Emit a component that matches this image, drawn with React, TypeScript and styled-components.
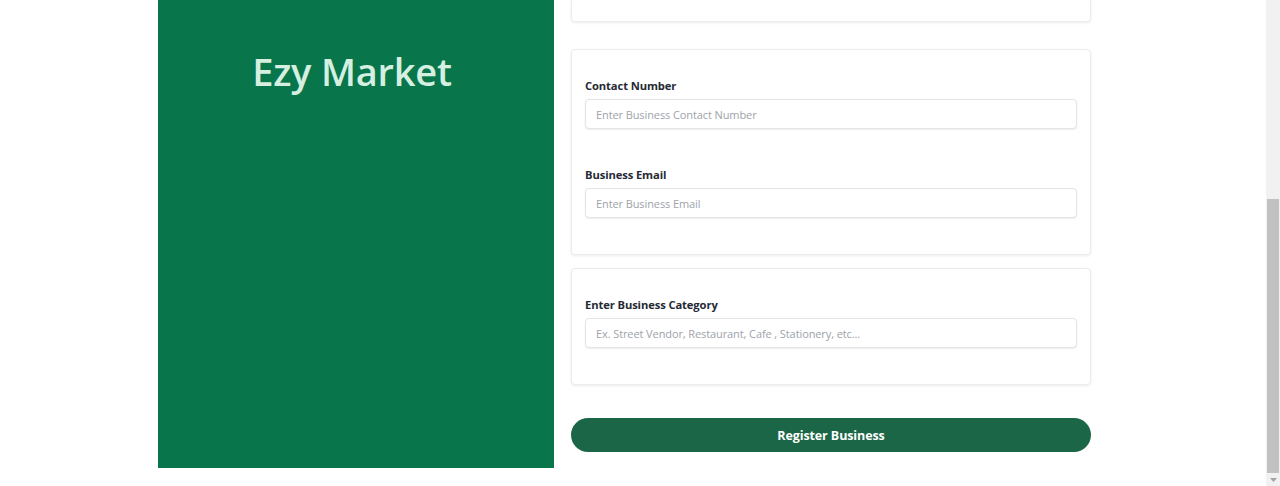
import React from "react";
import styled, { createGlobalStyle } from "styled-components";

const GlobalStyle = createGlobalStyle`
  html, body {
    margin: 0;
    padding: 0;
    height: 486px;
    overflow: hidden;
    background: #ffffff;
    font-family: "Open Sans", "Noto Sans", Arial, sans-serif;
  }
  * { box-sizing: border-box; }
`;

const Page = styled.div`
  display: flex;
  height: 486px;
  width: 1280px;
`;

const Main = styled.main`
  flex: 1;
  display: flex;
  justify-content: center;
  align-items: flex-start;
`;

const Container = styled.div`
  width: 950px;
  height: 468px;
  display: flex;
`;

const Brand = styled.aside`
  width: 396px;
  height: 100%;
  background: #08754b;
  display: flex;
  justify-content: center;
  padding: 43px 8px 0 0;
`;

const BrandTitle = styled.h1`
  margin: 0;
  font-family: "Open Sans", sans-serif;
  font-weight: 600;
  font-size: 38px;
  line-height: 56px;
  color: #d5efe0;
  letter-spacing: -0.2px;
`;

const FormColumn = styled.form`
  flex: 1;
  display: flex;
  flex-direction: column;
  padding: 0 17px;
`;

const Card = styled.section<{ $clipped?: boolean; $mt?: number }>`
  background: #fff;
  border: 1px solid #ececec;
  border-radius: 4px;
  box-shadow: 0 1px 3px rgba(0, 0, 0, 0.08);
  margin-top: ${(p) => p.$mt ?? 0}px;
  display: flex;
  flex-direction: column;
  gap: 36px;
  padding: ${(p) => (p.$clipped ? "0" : "26px 13px 36px")};
  height: ${(p) => (p.$clipped ? "22px" : "auto")};
  ${(p) =>
    p.$clipped &&
    `border-top: none; border-top-left-radius: 0; border-top-right-radius: 0;`}
`;

const Field = styled.div`
  display: flex;
  flex-direction: column;
  gap: 4px;
`;

const Label = styled.label`
  font-size: 11.2px;
  font-weight: 700;
  line-height: 19px;
  color: #252a35;
  letter-spacing: -0.1px;
`;

const Input = styled.input`
  height: 30px;
  width: 100%;
  border: 1px solid #e4e4e4;
  border-radius: 4px;
  box-shadow: 0 1px 2px rgba(0, 0, 0, 0.07);
  padding: 0 10px;
  font-family: "Open Sans", sans-serif;
  font-size: 11px;
  color: #333;
  outline: none;
  &::placeholder {
    color: #9ea3aa;
    letter-spacing: -0.1px;
  }
`;

const SubmitButton = styled.button`
  margin-top: 33px;
  height: 34px;
  border: none;
  border-radius: 17px;
  background: #1b6646;
  color: #ffffff;
  font-family: "Open Sans", sans-serif;
  font-weight: 700;
  font-size: 12.5px;
  letter-spacing: -0.1px;
  cursor: pointer;
`;

const ScrollTrack = styled.div`
  width: 14px;
  height: 486px;
  background: #f1f1f1;
  display: flex;
  flex-direction: column;
  justify-content: flex-end;
  align-items: center;
`;

const ScrollThumb = styled.div`
  width: 12px;
  height: 274px;
  background: #c1c1c1;
`;

const ScrollArrow = styled.div`
  height: 13px;
  width: 14px;
  display: flex;
  align-items: center;
  justify-content: center;
`;

export default function App() {
  return (
    <>
      <GlobalStyle />
      <Page>
        <Main>
          <Container>
            <Brand>
              <BrandTitle>Ezy Market</BrandTitle>
            </Brand>
            <FormColumn onSubmit={(e) => e.preventDefault()}>
              <Card $clipped />
              <Card $mt={27}>
                <Field>
                  <Label>Contact Number</Label>
                  <Input placeholder="Enter Business Contact Number" />
                </Field>
                <Field>
                  <Label>Business Email</Label>
                  <Input placeholder="Enter Business Email" />
                </Field>
              </Card>
              <Card $mt={13}>
                <Field>
                  <Label>Enter Business Category</Label>
                  <Input placeholder="Ex. Street Vendor, Restaurant, Cafe , Stationery, etc..." />
                </Field>
              </Card>
              <SubmitButton type="submit">Register Business</SubmitButton>
            </FormColumn>
          </Container>
        </Main>
        <ScrollTrack>
          <ScrollThumb />
          <ScrollArrow>
            <svg width="7" height="4" viewBox="0 0 7 4">
              <path d="M0 0 H7 L3.5 4 Z" fill="#a3a3a3" />
            </svg>
          </ScrollArrow>
        </ScrollTrack>
      </Page>
    </>
  );
}
